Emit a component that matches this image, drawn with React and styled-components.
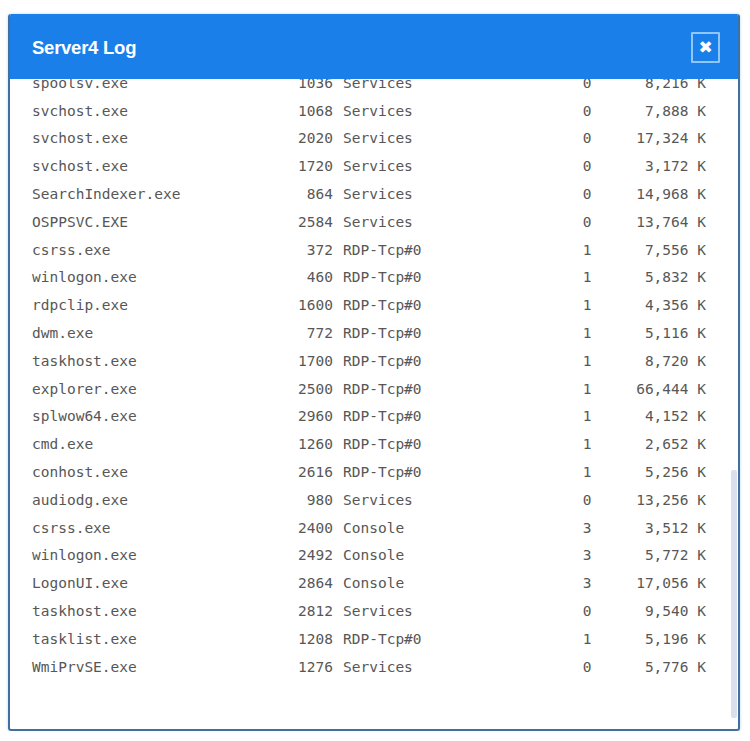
import React from 'react';
import styled, { createGlobalStyle } from 'styled-components';

const GlobalStyle = createGlobalStyle`
  html, body {
    margin: 0;
    padding: 0;
    background: #ffffff;
  }
`;

const processes = [
  ['spoolsv.exe', '1036', 'Services', '0', '8,216 K'],
  ['svchost.exe', '1068', 'Services', '0', '7,888 K'],
  ['svchost.exe', '2020', 'Services', '0', '17,324 K'],
  ['svchost.exe', '1720', 'Services', '0', '3,172 K'],
  ['SearchIndexer.exe', '864', 'Services', '0', '14,968 K'],
  ['OSPPSVC.EXE', '2584', 'Services', '0', '13,764 K'],
  ['csrss.exe', '372', 'RDP-Tcp#0', '1', '7,556 K'],
  ['winlogon.exe', '460', 'RDP-Tcp#0', '1', '5,832 K'],
  ['rdpclip.exe', '1600', 'RDP-Tcp#0', '1', '4,356 K'],
  ['dwm.exe', '772', 'RDP-Tcp#0', '1', '5,116 K'],
  ['taskhost.exe', '1700', 'RDP-Tcp#0', '1', '8,720 K'],
  ['explorer.exe', '2500', 'RDP-Tcp#0', '1', '66,444 K'],
  ['splwow64.exe', '2960', 'RDP-Tcp#0', '1', '4,152 K'],
  ['cmd.exe', '1260', 'RDP-Tcp#0', '1', '2,652 K'],
  ['conhost.exe', '2616', 'RDP-Tcp#0', '1', '5,256 K'],
  ['audiodg.exe', '980', 'Services', '0', '13,256 K'],
  ['csrss.exe', '2400', 'Console', '3', '3,512 K'],
  ['winlogon.exe', '2492', 'Console', '3', '5,772 K'],
  ['LogonUI.exe', '2864', 'Console', '3', '17,056 K'],
  ['taskhost.exe', '2812', 'Services', '0', '9,540 K'],
  ['tasklist.exe', '1208', 'RDP-Tcp#0', '1', '5,196 K'],
  ['WmiPrvSE.exe', '1276', 'Services', '0', '5,776 K'],
];

const Window = styled.div`
  margin: 14px 0 0 8px;
  width: 732px;
  height: 717px;
  box-sizing: border-box;
  border: 2px solid #3f70a0;
  border-top: none;
  border-radius: 3px;
  overflow: hidden;
  display: flex;
  flex-direction: column;
  box-shadow: 0 0 3px rgba(120, 180, 230, 0.55);
  background: #ffffff;
`;

const Header = styled.div`
  height: 65px;
  flex: none;
  background: #1b7fea;
  display: flex;
  align-items: center;
  justify-content: space-between;
  padding: 2px 18px 0 22px;
  box-sizing: border-box;
  position: relative;
  z-index: 1;
`;

const Title = styled.h1`
  margin: 0;
  font-family: "Liberation Sans", Arial, sans-serif;
  font-weight: 700;
  font-size: 18.5px;
  letter-spacing: -0.25px;
  color: #ffffff;
`;

const CloseButton = styled.button`
  width: 29px;
  height: 31px;
  box-sizing: border-box;
  border: 2px solid #8ec6ff;
  border-radius: 1px;
  background: transparent;
  color: #ffffff;
  font-family: "DejaVu Sans", sans-serif;
  font-weight: 700;
  font-size: 17px;
  line-height: 1;
  padding: 0;
  display: flex;
  align-items: center;
  justify-content: center;
`;

const Body = styled.div`
  flex: 1;
  display: flex;
  overflow: hidden;
`;

const List = styled.div`
  flex: 1;
  padding-left: 22px;
  margin-top: -10px;
`;

const Row = styled.div`
  display: grid;
  grid-template-columns: 230px 71px 239px 30px 104px;
  height: 27.8px;
  align-items: center;
  font-family: "DejaVu Sans Mono", "Liberation Mono", monospace;
  font-size: 14.5px;
  color: #575757;
  white-space: pre;
`;

const Cell = styled.span`
  text-align: ${p => p.$align || 'left'};
  padding-left: ${p => p.$pad || 0}px;
`;

const Track = styled.div`
  width: 6px;
  margin-right: 1px;
  display: flex;
  flex-direction: column;
`;

const Thumb = styled.div`
  margin-top: 391px;
  height: 248px;
  background: #dcdfec;
  border-radius: 2px;
`;

export default function App() {
  return (
    <>
      <GlobalStyle />
      <Window>
        <Header>
          <Title>Server4 Log</Title>
          <CloseButton aria-label="Close">✖</CloseButton>
        </Header>
        <Body>
          <List>
            {processes.map(([name, pid, session, num, mem], i) => (
              <Row key={i}>
                <Cell>{name}</Cell>
                <Cell $align="right">{pid}</Cell>
                <Cell $pad={10}>{session}</Cell>
                <Cell $align="center">{num}</Cell>
                <Cell $align="right">{mem}</Cell>
              </Row>
            ))}
          </List>
          <Track>
            <Thumb />
          </Track>
        </Body>
      </Window>
    </>
  );
}
